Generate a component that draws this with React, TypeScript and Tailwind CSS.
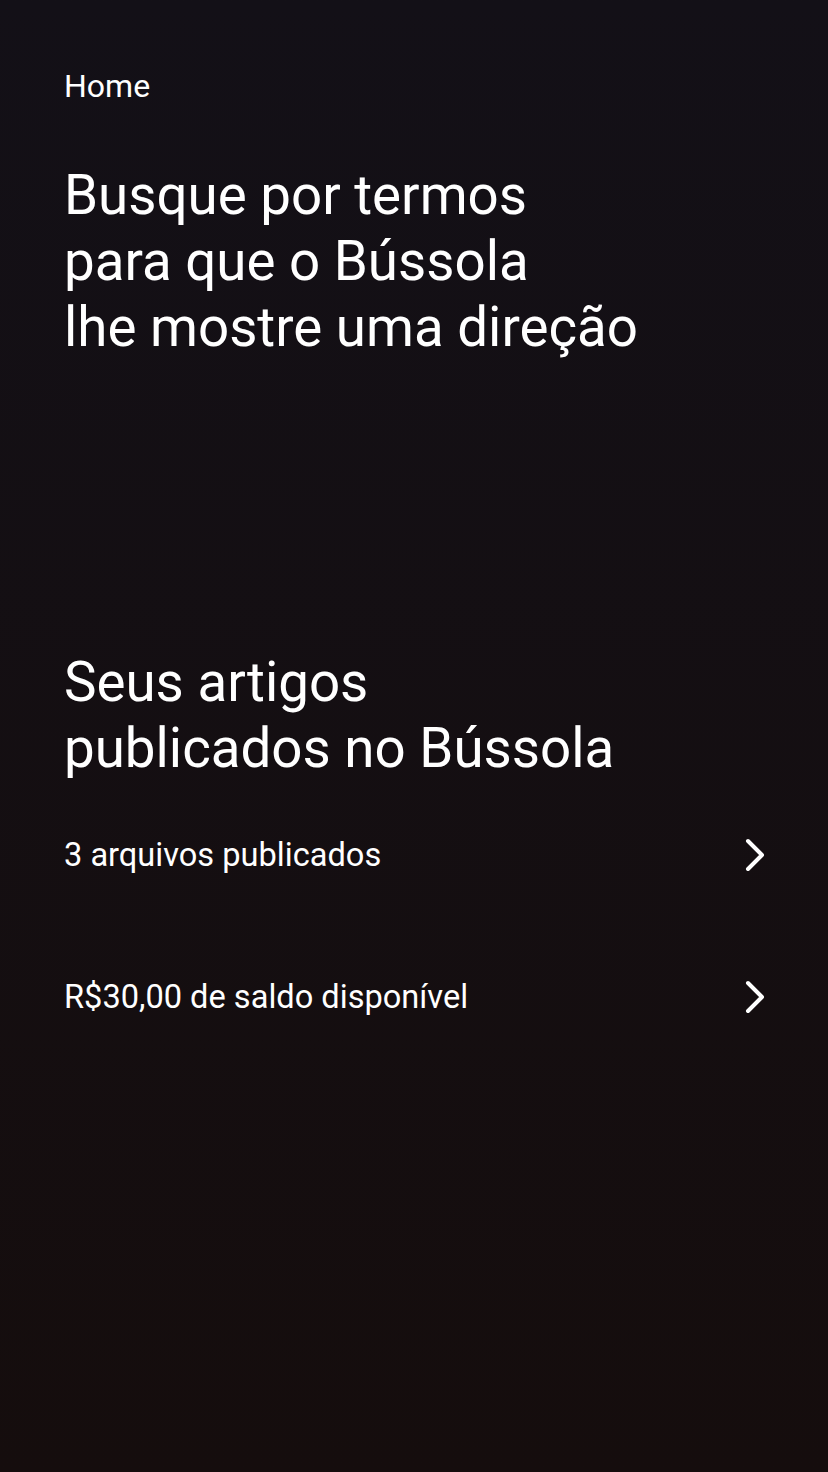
import React from 'react';

const Chevron: React.FC = () => (
  <svg width="22" height="36" viewBox="0 0 22 36" fill="none">
    <polyline points="4,4 18,18 4,32" stroke="white" strokeWidth="4" strokeLinecap="round" strokeLinejoin="round" />
  </svg>
);

const rows = ['3 arquivos publicados', 'R$30,00 de saldo disponível'];

const App: React.FC = () => {
  return (
    <div
      className="min-h-screen w-full bg-gradient-to-b from-[#131017] to-[#150d0d] text-white flex flex-col pl-[64px] pr-[62px] pt-[66px]"
      style={{ fontFamily: 'Roboto, "Noto Sans", sans-serif' }}
    >
      <p className="text-[32px] leading-[40px]">Home</p>

      <h1 className="mt-[56px] text-[54.7px] leading-[66px] font-normal">
        Busque por termos
        <br />
        para que o Bússola
        <br />
        lhe mostre uma direção
      </h1>

      <h2 className="mt-[289px] text-[54.7px] leading-[66px] font-normal">
        Seus artigos
        <br />
        publicados no Bússola
      </h2>

      <div className="mt-[38px] flex flex-col gap-[70px]">
        {rows.map((r) => (
          <button key={r} className="h-[72px] flex items-center justify-between text-left">
            <span className="text-[32.6px] leading-[40px]">{r}</span>
            <Chevron />
          </button>
        ))}
      </div>
    </div>
  );
};

export default App;
